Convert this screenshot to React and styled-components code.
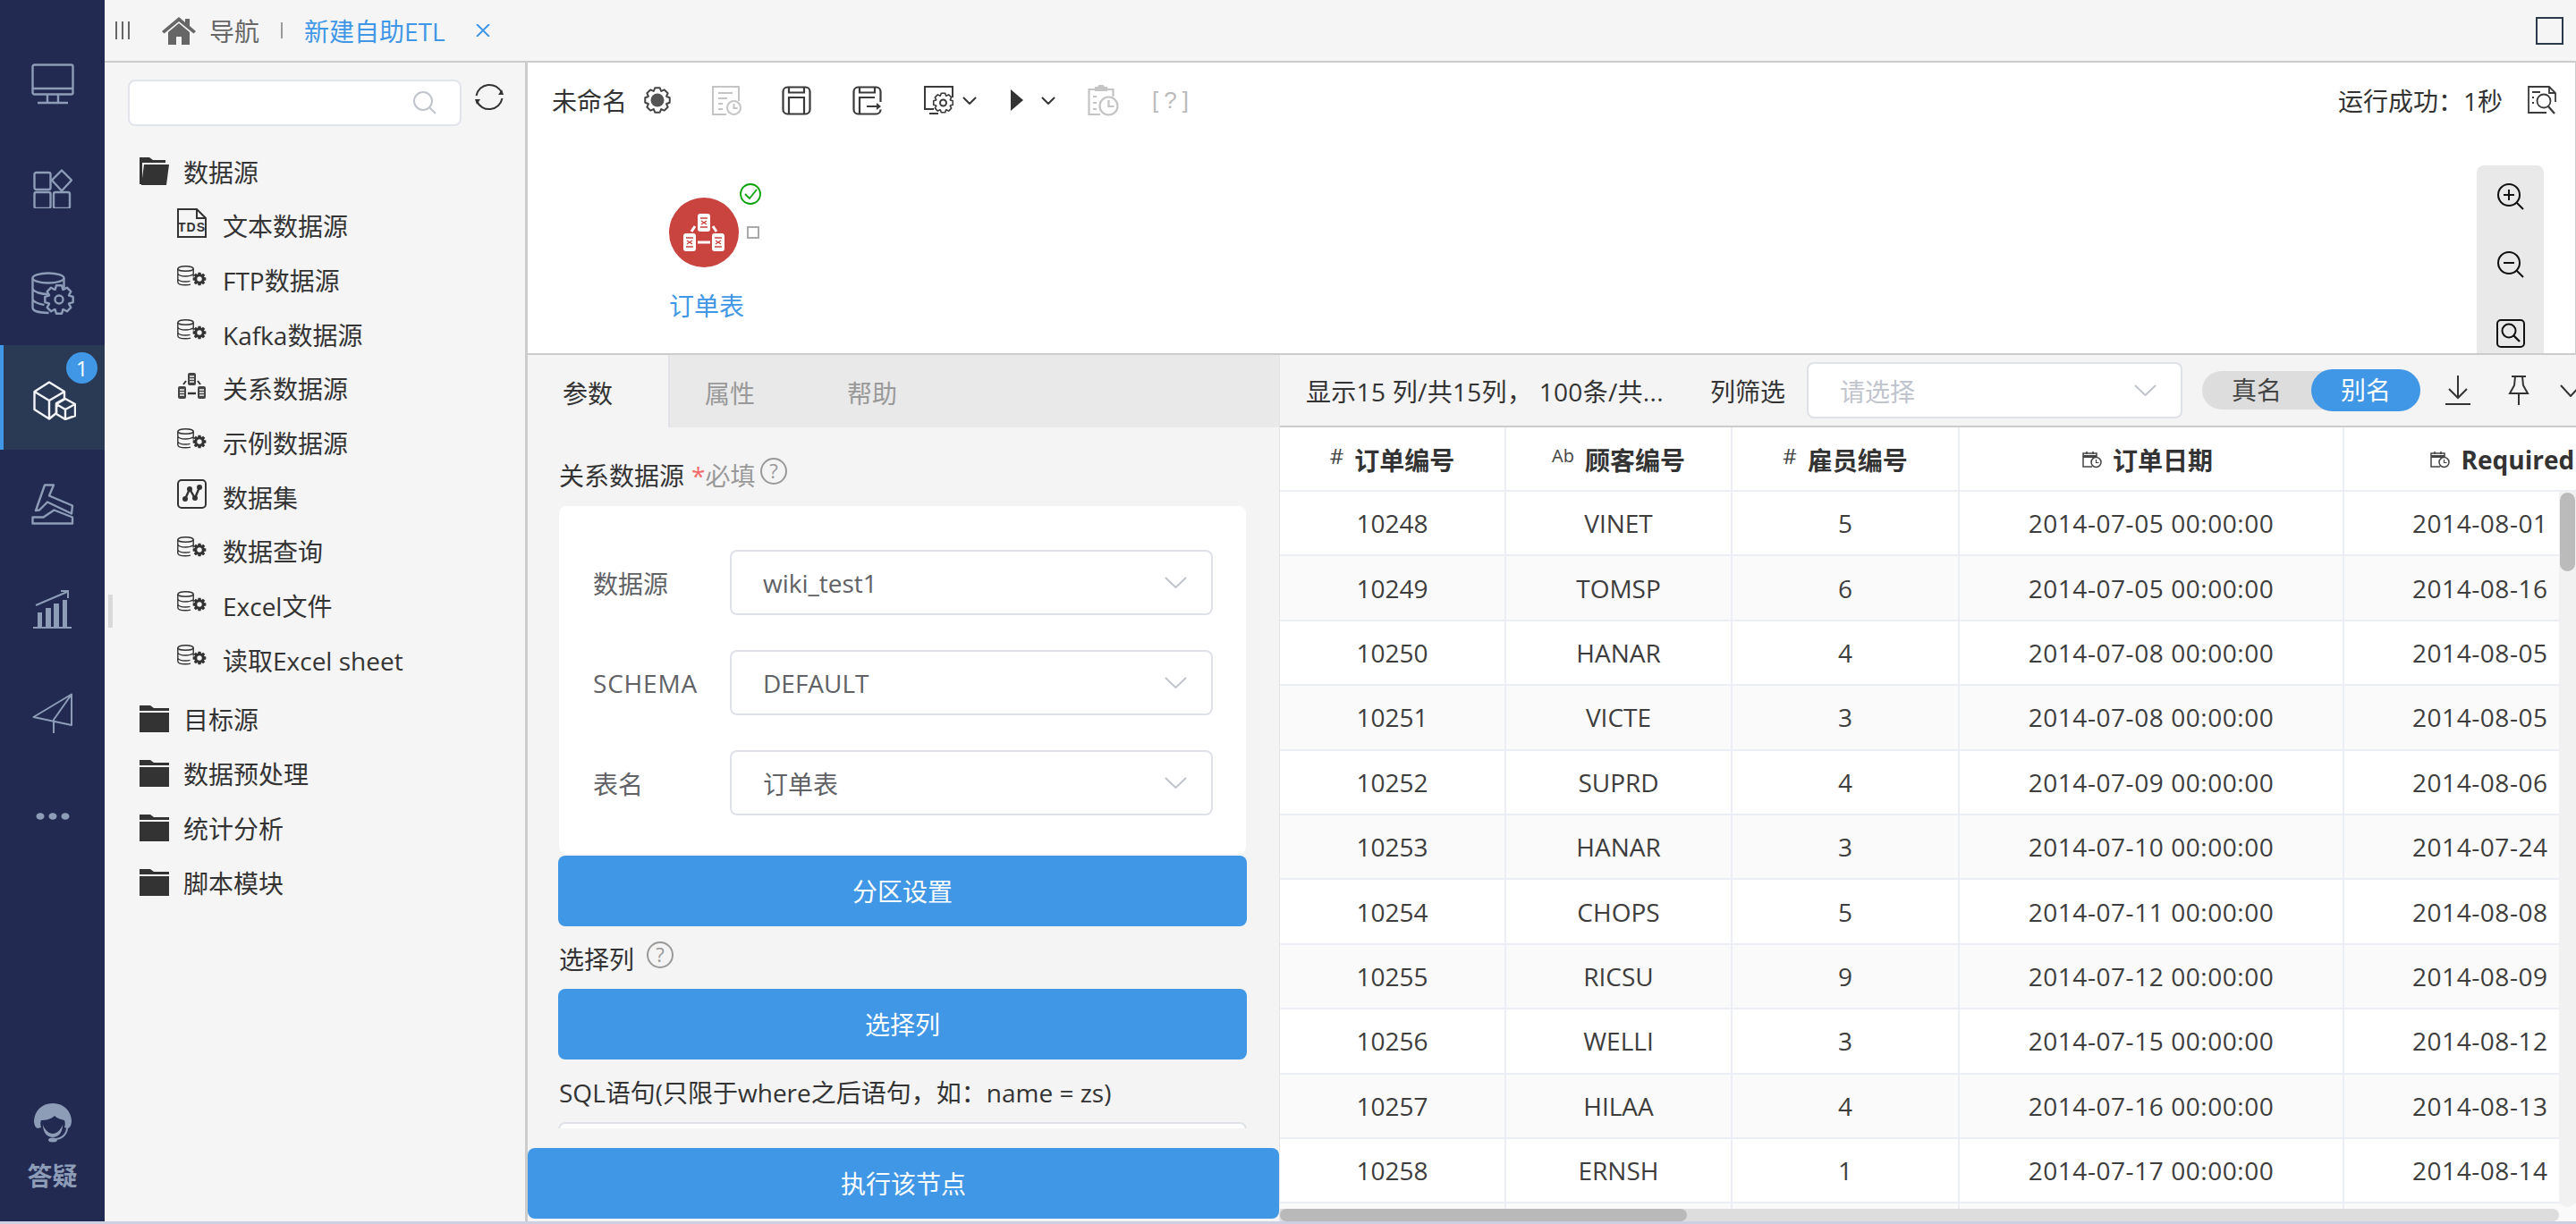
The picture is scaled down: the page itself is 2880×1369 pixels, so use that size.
import React from "react";
import styled, { createGlobalStyle } from "styled-components";

const BLUE = "#3f97e6";
const NAV_ICON = "#8d9cb7";
const NAV_BG = "#222a52";
const LINE = "#eceef5";

const GlobalStyle = createGlobalStyle`
  html, body {
    margin: 0;
    padding: 0;
    height: 100%;
    overflow: hidden;
    background: #f5f5f5;
    color: #333;
    font-family: "Open Sans", "Noto Sans CJK SC", sans-serif;
    font-size: 28px;
  }
  * { box-sizing: border-box; }
`;

const Shell = styled.div`
  display: flex;
  height: 100vh;
  border-bottom: 3px solid #cdd0e0;
`;

/* left nav */
const SideNav = styled.nav`
  width: 117px;
  flex: none;
  display: flex;
  flex-direction: column;
  padding-top: 35px;
  background: ${NAV_BG};
`;
const NavItem = styled.div`
  position: relative;
  height: 117px;
  flex: none;
  display: flex;
  align-items: center;
  justify-content: center;
  padding-top: ${(p) => p.$pad || 0}px;
  background: ${(p) => (p.$active ? "#2a3a54" : "transparent")};
  border-left: ${(p) => (p.$active ? `4px solid ${BLUE}` : "none")};
`;
const Badge = styled.span`
  position: absolute;
  top: 8px;
  left: 70px;
  width: 35px;
  height: 35px;
  border-radius: 50%;
  background: ${BLUE};
  color: #fff;
  font-size: 24px;
  line-height: 35px;
  text-align: center;
`;
const NavFoot = styled.div`
  margin-top: auto;
  padding-bottom: 32px;
  display: flex;
  flex-direction: column;
  align-items: center;
  gap: 18px;
  color: ${NAV_ICON};
  font-weight: 700;
  line-height: 38px;
`;

const Body = styled.div`
  flex: 1;
  min-width: 0;
  display: flex;
  flex-direction: column;
`;

/* top tabs */
const TabStrip = styled.div`
  height: 70px;
  flex: none;
  display: flex;
  align-items: center;
  padding-left: 11px;
  padding-right: 14px;
  background: #f5f5f5;
  border-bottom: 2px solid #ccc;
`;
const HomeGlyph = styled.svg`
  margin-left: 35px;
`;
const HomeLabel = styled.span`
  margin-left: 15px;
  color: #666;
`;
const TabSep = styled.span`
  width: 2px;
  height: 18px;
  margin-left: 24px;
  background: #999;
`;
const CurrentTab = styled.span`
  margin-left: 24px;
  color: ${BLUE};
`;
const CloseMark = styled.svg`
  margin-left: 34px;
`;
const MaxButton = styled.span`
  width: 31px;
  height: 31px;
  margin-left: auto;
  border: 2px solid #2b3a4a;
`;

const Workspace = styled.div`
  flex: 1;
  min-height: 0;
  display: flex;
`;

/* tree */
const TreePanel = styled.aside`
  position: relative;
  width: 473px;
  flex: none;
  padding: 19px 0 0 26px;
  background: #f5f5f5;
  border-right: 3px solid #ccc;
`;
const SearchRow = styled.div`
  display: flex;
  align-items: flex-start;
  gap: 15px;
`;
const SearchBox = styled.div`
  width: 373px;
  height: 52px;
  display: flex;
  align-items: center;
  justify-content: flex-end;
  padding-right: 26px;
  background: #fff;
  border: 2px solid #e2e4ec;
  border-radius: 8px;
`;
const Refresh = styled.svg`
  margin-top: 3px;
`;
const Tree = styled.ul`
  list-style: none;
  margin: 20px 0 0;
  padding: 0;
`;
const TreeRow = styled.li`
  height: ${(p) => (p.$child ? "60.7px" : "61px")};
  display: flex;
  align-items: center;
  padding-left: ${(p) => (p.$child ? "55px" : "13px")};
  gap: ${(p) => (p.$child ? "18px" : "16px")};
  color: #333;
  white-space: nowrap;
`;
const TreeChildren = styled.ul`
  list-style: none;
  margin: 0 0 5px;
  padding: 0;
`;
const TreeIconBox = styled.span`
  width: 33px;
  height: 33px;
  flex: none;
  display: flex;
  align-items: center;
  justify-content: center;
  margin-top: ${(p) => p.$up || 0}px;
`;
const DragHandle = styled.span`
  position: absolute;
  left: 4px;
  top: 595px;
  width: 5px;
  height: 37px;
  background: #d9d9d9;
`;

const MainArea = styled.main`
  flex: 1;
  min-width: 0;
  display: flex;
  flex-direction: column;
`;

/* flow toolbar + canvas */
const FlowPane = styled.section`
  position: relative;
  height: 327px;
  flex: none;
  background: #fff;
  border-bottom: 2px solid #ccc;
  border-right: 1px solid #ccc;
`;
const FlowBar = styled.div`
  height: 84px;
  display: flex;
  align-items: center;
  padding: 0 21px 0 27px;
`;
const ToolSlot = styled.span`
  display: flex;
  margin-left: ${(p) => p.$gap}px;
`;
const HelpTag = styled.span`
  margin-left: 37px;
  color: #bbb;
  font-size: 26px;
  letter-spacing: 6px;
  white-space: nowrap;
  font-family: "Liberation Sans", sans-serif;
`;
const RunStatus = styled.span`
  margin-left: auto;
`;
const StatusSlot = styled.span`
  display: flex;
  margin-left: 28px;
`;
const FlowNode = styled.div`
  position: absolute;
  left: 158px;
  top: 151px;
  width: 84px;
`;
const NodeCircle = styled.div`
  width: 78px;
  height: 78px;
  border-radius: 50%;
  background: #c9433f;
`;
const NodeCheck = styled.svg`
  position: absolute;
  left: 79px;
  top: -16px;
`;
const NodeBox = styled.span`
  position: absolute;
  left: 87px;
  top: 32px;
  width: 14px;
  height: 14px;
  border: 2px solid #aaa;
`;
const NodeLabel = styled.div`
  margin-top: 23px;
  color: ${BLUE};
  line-height: 40px;
  white-space: nowrap;
`;
const ZoomTools = styled.div`
  position: absolute;
  right: 35px;
  bottom: 0;
  top: 115px;
  width: 75px;
  display: flex;
  flex-direction: column;
  align-items: center;
  gap: 46px;
  padding-top: 20px;
  background: #e9e9e9;
  border-radius: 8px 8px 0 0;
`;

const BottomPane = styled.div`
  flex: 1;
  min-height: 0;
  display: flex;
`;

/* params form */
const FormPane = styled.section`
  width: 840px;
  flex: none;
  display: flex;
  flex-direction: column;
  background: #f4f4f4;
`;
const FormTabs = styled.div`
  height: 81px;
  flex: none;
  display: flex;
  background: #e9e9e9;
`;
const FormTab = styled.div`
  width: 159px;
  padding: 24px 0 0 39px;
  line-height: 38px;
  color: ${(p) => (p.$active ? "#333" : "#999")};
  background: ${(p) => (p.$active ? "#f4f4f4" : "transparent")};
  border-right: ${(p) => (p.$active ? "2px solid #e0e2e8" : "none")};
`;
const FormBody = styled.div`
  flex: 1;
  min-height: 0;
  overflow: hidden;
  padding: 33px 36px 0 34px;
`;
const FieldLabel = styled.div`
  display: flex;
  align-items: center;
  height: 40px;
  margin-top: ${(p) => p.$top || 0}px;
  padding-left: 1px;
  color: #333;
  white-space: nowrap;
`;
const Required = styled.span`
  margin-left: 8px;
  color: #999;
  & > b {
    color: #f56c6c;
    font-weight: 400;
  }
`;
const HintIcon = styled.svg`
  margin: -8px 0 0 ${(p) => p.$gap || 9}px;
`;
const Card = styled.div`
  margin: 15px 1px 0;
  padding: 49px 37px 43px 38px;
  background: #fff;
  border-radius: 8px;
  display: flex;
  flex-direction: column;
  gap: 39px;
`;
const FieldRow = styled.div`
  display: flex;
  align-items: center;
  color: #606266;
`;
const FieldName = styled.span`
  width: 153px;
  flex: none;
  letter-spacing: ${(p) => (p.$latin ? "0.8px" : "0")};
`;
const SelectBox = styled.div`
  flex: 1;
  height: ${(p) => p.$h || 73}px;
  display: flex;
  align-items: center;
  justify-content: space-between;
  padding: 0 27px 0 35px;
  background: #fff;
  border: 2px solid #dfe1e8;
  border-radius: 8px;
  color: ${(p) => (p.$placeholder ? "#c0c4cc" : "#606266")};
`;
const PrimaryButton = styled.button`
  display: block;
  width: 100%;
  height: 79px;
  margin-top: ${(p) => p.$top || 0}px;
  padding: 0 0 2px;
  border: none;
  border-radius: 8px;
  background: ${BLUE};
  color: #fff;
  font: inherit;
`;
const SqlBox = styled.div`
  height: 120px;
  margin-top: 14px;
  background: #fff;
  border: 2px solid #dfe1e8;
  border-radius: 8px;
`;
const FormFooter = styled.div`
  margin: 22px 0 3px;
  flex: none;
`;

/* data table */
const DataPane = styled.section`
  flex: 1;
  min-width: 0;
  display: flex;
  flex-direction: column;
  background: #fff;
  border-left: 1px solid #e5e5e5;
`;
const DataBar = styled.div`
  height: 81px;
  flex: none;
  display: flex;
  align-items: center;
  padding-left: 29px;
  overflow: hidden;
  background: #f4f4f4;
  border-bottom: 2px solid #ccc;
`;
const DataInfo = styled.span`
  width: 401px;
  flex: none;
  white-space: nowrap;
  letter-spacing: 0.3px;
`;
const FilterLabel = styled.span`
  flex: none;
  margin-left: 51px;
`;
const FilterSelect = styled(SelectBox)`
  flex: none;
  width: 420px;
  margin-left: 24px;
`;
const NameToggle = styled.div`
  flex: none;
  width: 244px;
  height: 43px;
  margin-left: 22px;
  display: flex;
  align-items: center;
  background: #ddd;
  border-radius: 22px;
`;
const ToggleOption = styled.span`
  width: 122px;
  height: ${(p) => (p.$on ? "47px" : "43px")};
  line-height: ${(p) => (p.$on ? "47px" : "43px")};
  text-align: center;
  border-radius: 24px;
  color: ${(p) => (p.$on ? "#fff" : "#444")};
  background: ${(p) => (p.$on ? BLUE : "transparent")};
`;
const BarIcon = styled.svg`
  flex: none;
  margin-left: ${(p) => p.$gap}px;
`;
const TableFrame = styled.div`
  position: relative;
  flex: 1;
  min-height: 0;
  overflow: hidden;
`;
const GridRow = styled.div`
  display: grid;
  grid-template-columns: 253px 253px 254px 430px 430px;
  width: 1620px;
  height: ${(p) => (p.$head ? "72px" : "72.4px")};
  background: ${(p) => (p.$alt ? "#fafafa" : "#fff")};
  border-bottom: 2px solid ${LINE};
`;
const Cell = styled.div`
  display: flex;
  align-items: center;
  justify-content: center;
  border-right: 2px solid ${LINE};
  overflow: hidden;
  white-space: nowrap;
  color: #3d3d3d;
`;
const DateCell = styled(Cell)`
  letter-spacing: 0.55px;
`;
const DueCell = styled(DateCell)`
  justify-content: flex-start;
  padding-left: 76px;
`;
const HeadCell = styled(Cell)`
  gap: 12px;
  padding-top: 1px;
  padding-right: ${(p) => (p.$date ? "8px" : "0")};
  font-weight: 700;
  color: #333;
`;
const TypeMark = styled.span`
  font-weight: 400;
  font-size: ${(p) => p.$size || 24}px;
  color: #444;
  margin-top: -8px;
`;
const VScroll = styled.div`
  position: absolute;
  top: 72px;
  right: 0;
  bottom: 16px;
  width: 19px;
  background: #f1f1f1;
  border-radius: 0 0 9px 9px;
`;
const VThumb = styled.div`
  height: 88px;
  margin: 1px 1px 0;
  background: #bbb;
  border-radius: 9px;
`;
const HScroll = styled.div`
  position: absolute;
  left: 0;
  right: 19px;
  bottom: 0;
  height: 14px;
  background: #ddd;
  border-radius: 0 7px 7px 0;
`;
const HThumb = styled.div`
  width: 455px;
  height: 14px;
  background: #b9b9b9;
  border-radius: 7px;
`;

/* icons */
const gearPath = (cx, cy, R, r, n) => {
  let d = "";
  for (let i = 0; i < n; i++) {
    const a = (i / n) * Math.PI * 2;
    const w = Math.PI / n;
    const pts = [
      [r, a - w * 0.95],
      [R, a - w * 0.5],
      [R, a + w * 0.5],
      [r, a + w * 0.95],
    ];
    pts.forEach(([rad, t], j) => {
      const x = (cx + rad * Math.cos(t)).toFixed(2);
      const y = (cy + rad * Math.sin(t)).toFixed(2);
      d += `${i === 0 && j === 0 ? "M" : "L"}${x} ${y} `;
    });
  }
  return d + "Z";
};

const Stroke = { fill: "none", stroke: NAV_ICON, strokeWidth: 2.4, strokeLinejoin: "round" };

const MonitorIcon = () => (
  <svg width="48" height="46" viewBox="0 0 48 46" {...Stroke}>
    <rect x="1.5" y="1.5" width="45" height="33" rx="2" />
    <path d="M1.5 28h45M18 35v9M30 35v9M7 44h34" />
  </svg>
);
const AppsIcon = () => (
  <svg width="44" height="44" viewBox="0 0 44 44" {...Stroke}>
    <rect x="1.5" y="4" width="18" height="19" rx="2" />
    <path d="M32 1.5l11 11-11 12-11-12z" />
    <rect x="1.5" y="26" width="18" height="18" rx="2" />
    <rect x="23" y="26" width="18" height="18" rx="2" />
  </svg>
);
const DbGearIcon = () => (
  <svg width="48" height="48" viewBox="0 0 48 48" {...Stroke}>
    <ellipse cx="19" cy="7" rx="17.5" ry="5.5" />
    <path d="M1.5 7v33c0 4 8 6 18 6M36.5 7v11M1.5 19c2 4 10 6 17 6M1.5 31c2 4 8 5 13 6" />
    <path d={gearPath(31, 31, 16, 12, 8)} />
    <circle cx="31" cy="31" r="4.5" />
  </svg>
);
const CubesIcon = () => (
  <svg width="48" height="44" viewBox="0 0 48 44" fill="none" stroke="#f2f4f8" strokeWidth="2.4" strokeLinejoin="round">
    <path d="M18 1.5L35 12v8l-9 5v11l-8 6.5L1.5 32V12zM1.5 12L18 22l17-10M18 22v20.5" />
    <path d="M36 20l11 6v13l-11 4-10-6V26zM26 26l10 6 11-6M36 32v11" />
  </svg>
);
const HammerIcon = () => (
  <svg width="48" height="46" viewBox="0 0 48 46" {...Stroke}>
    <path d="M5 30L15 1.5h10l-5 12 26 11-1 9-27-13-9 9z" />
    <path d="M1.5 44.5v-7h12l12-8 20.5 8v7z" />
  </svg>
);
const ChartIcon = () => (
  <svg width="44" height="44" viewBox="0 0 44 44" fill="none">
    <path d="M5 42V26h5v16zM14 42V21h6v21zM23 42V16h6v26zM33 42V12h5v30z" fill={NAV_ICON} />
    <path d="M0 43h43M3 18L38 3M31 2h8v8" stroke={NAV_ICON} strokeWidth="2" />
  </svg>
);
const PlaneIcon = () => (
  <svg width="46" height="46" viewBox="0 0 46 46" {...Stroke} strokeWidth="2">
    <path d="M1.5 27L44 1.5V36zM44 1.5L24 30v15" />
  </svg>
);
const DotsIcon = () => (
  <svg width="38" height="10" viewBox="0 0 38 10" fill={NAV_ICON}>
    <ellipse cx="5" cy="5" rx="4.5" ry="3.8" />
    <ellipse cx="19" cy="5" rx="4.5" ry="3.8" />
    <ellipse cx="33" cy="5" rx="4.5" ry="3.8" />
  </svg>
);
const HeadsetIcon = () => (
  <svg width="42" height="44" viewBox="0 0 42 44" fill={NAV_ICON}>
    <path d="M21 0C8 0 1 9 0 19c0 4 1 8 4 9l4-1c-1-3-1-6 0-8 5 0 11-1 15-5 3 3 7 4 11 5 1 3 1 5 0 8l4 1c3-1 4-5 4-9C41 9 34 0 21 0z" />
    <path d="M10 24c2 6 7 10 11 10s9-4 11-10c0 9-5 14-11 14S10 33 10 24z" />
    <path d="M37 27c0 7-5 12-12 13" fill="none" stroke={NAV_ICON} strokeWidth="2" />
    <ellipse cx="21" cy="41" rx="5" ry="2.5" />
  </svg>
);

const FolderClosed = () => (
  <svg width="33" height="30" viewBox="0 0 33 30" fill="#333">
    <path d="M0 0h12l4 3h17v3H0z" />
    <path d="M0 8h33v22H0z" />
  </svg>
);
const FolderOpen = () => (
  <svg width="33" height="32" viewBox="0 0 33 32" fill="#333">
    <path d="M0 30V0h11l4 3h14v3H3v24z" />
    <path d="M5 8h28l-3 23H2z" />
  </svg>
);
const TdsIcon = () => (
  <svg width="33" height="33" viewBox="0 0 33 33" fill="none" stroke="#333" strokeWidth="2">
    <path d="M1 1h21l10 10v21H1zM22 1v10h10" />
    <text x="16.5" y="26" textAnchor="middle" fontFamily="Liberation Sans, sans-serif" fontSize="14" fontWeight="700" letterSpacing="1" fill="#333" stroke="none">
      TDS
    </text>
  </svg>
);
const DbSmallIcon = () => (
  <svg width="33" height="23" viewBox="0 0 33 23" fill="none" stroke="#333" strokeWidth="1.4">
    <ellipse cx="9.5" cy="3.5" rx="8.7" ry="2.8" />
    <path d="M.8 3.5v15c0 2.2 4 3.3 8.7 3.3 2 0 4-.2 5.5-.7M18.2 3.5v9M.8 9c1 2.2 4.5 3 8.7 3 3 0 6-.5 8-2M.8 15c1 2.2 4.5 3 8.7 3 2 0 3.5-.2 5-.6" />
    <path d={gearPath(25, 15, 7.5, 5.4, 8)} fill="#333" stroke="none" />
    <circle cx="25" cy="15" r="2.7" fill="#f5f5f5" stroke="none" />
  </svg>
);
const Capsule = ({ x, y, color, inner }) => (
  <g>
    <rect x={x} y={y} width="9" height="14" rx="2" fill={color} />
    <path d={`M${x + 2} ${y + 4}h5M${x + 2} ${y + 10}h5M${x + 2} ${y + 7}h5`} stroke={inner} strokeWidth="1.4" />
  </g>
);
const RelationIcon = () => (
  <svg width="33" height="31" viewBox="0 0 33 31" fill="none">
    <Capsule x={12} y={1} color="#444" inner="#f5f5f5" />
    <Capsule x={1} y={16} color="#444" inner="#f5f5f5" />
    <Capsule x={23} y={16} color="#444" inner="#f5f5f5" />
    <path d="M12 24h9" stroke="#333" strokeWidth="2.4" />
    <path d="M7 14l3-4M26 14l-3-4" stroke="#333" strokeWidth="2" />
  </svg>
);
const DatasetIcon = () => (
  <svg width="33" height="33" viewBox="0 0 33 33" fill="none" stroke="#333" strokeWidth="2">
    <rect x="1" y="1" width="31" height="31" rx="4" />
    <path d="M9 22l5-11 6 10 5-12" strokeWidth="2.4" />
    <g fill="#333" stroke="none">
      <circle cx="9" cy="22" r="3" />
      <circle cx="14" cy="11" r="3" />
      <circle cx="20" cy="21" r="3" />
      <circle cx="25" cy="9" r="3" />
    </g>
  </svg>
);

const GearDotIcon = () => (
  <svg width="30" height="30" viewBox="0 0 30 30">
    <path d={gearPath(15, 15, 14, 11, 8)} fill="none" stroke="#444" strokeWidth="2" strokeLinejoin="round" />
    <circle cx="15" cy="15" r="7.5" fill="#555" />
  </svg>
);
const DocClockIcon = () => (
  <svg width="33" height="33" viewBox="0 0 33 33" fill="none" stroke="#c4c4c4" strokeWidth="2">
    <path d="M16 32H1V1h29v16" />
    <path d="M7 8h16M7 14h10M7 20h5M7 26h5" />
    <circle cx="24.5" cy="24.5" r="7.5" fill="#fff" />
    <path d="M24.5 20v5h4" />
  </svg>
);
const SaveIcon = () => (
  <svg width="33" height="33" viewBox="0 0 33 33" fill="none" stroke="#3a3a3a" strokeWidth="2.2">
    <rect x="1.5" y="1.5" width="30" height="30" rx="5" />
    <path d="M8 1.5v6h17v-6M8 31.5V13h17v18.5" />
  </svg>
);
const SaveAsIcon = () => (
  <svg width="33" height="33" viewBox="0 0 33 33" fill="none" stroke="#3a3a3a" strokeWidth="2.2">
    <path d="M31.5 18V6.5a5 5 0 0 0-5-5h-20a5 5 0 0 0-5 5v20a5 5 0 0 0 5 5h20a5 5 0 0 0 5-5" />
    <path d="M8 1.5v6h17v-6M8 31.5V13h17M16 23h14" />
    <path d="M27 19l5 4-5 4z" fill="#3a3a3a" stroke="none" />
  </svg>
);
const MonitorGearIcon = () => (
  <svg width="33" height="33" viewBox="0 0 33 33" fill="none" stroke="#3a3a3a" strokeWidth="2">
    <path d="M11 26H1V1h31v12M6 31h10" />
    <path d={gearPath(21.5, 19, 11, 8.5, 8)} fill="#fff" strokeWidth="1.6" strokeLinejoin="round" />
    <circle cx="21.5" cy="19" r="3.5" />
  </svg>
);
const ChevronThin = ({ w = 16, h = 9, color = "#333", sw = 2 }) => (
  <svg width={w} height={h} viewBox={`0 0 ${w} ${h}`} fill="none" stroke={color} strokeWidth={sw}>
    <path d={`M1 1l${w / 2 - 1} ${h - 2} ${w / 2 - 1} ${-(h - 2)}`} />
  </svg>
);
const PlayIcon = () => (
  <svg width="14" height="24" viewBox="0 0 14 24" fill="#333">
    <path d="M0 0l14 12L0 24z" />
  </svg>
);
const ClipClockIcon = () => (
  <svg width="35" height="35" viewBox="0 0 35 35" fill="none" stroke="#c4c4c4" strokeWidth="2.2">
    <path d="M14 33H1.5V5H9M21 5h7.5v8" />
    <path d="M9 6V3h3l1-2h4l1 2h3v3z" fill="#c4c4c4" />
    <path d="M6 13h4M6 20h4M6 27h4" />
    <circle cx="23.5" cy="23.5" r="10" fill="#fff" />
    <path d="M23.5 17v7h6" />
  </svg>
);
const DocSearchIcon = () => (
  <svg width="32" height="32" viewBox="0 0 32 32" fill="none" stroke="#3a3a3a" strokeWidth="1.8">
    <path d="M21 30H1V1h23l7 7v10M24 1v7h7" />
    <path d="M5 7h9M5 13h2M5 19h2" />
    <circle cx="18" cy="17" r="7.5" />
    <path d="M23 23l7 8" strokeWidth="2.2" />
  </svg>
);
const ZoomGlass = ({ mark }) => (
  <svg width="30" height="30" viewBox="0 0 30 30" fill="none" stroke="#111" strokeWidth="2">
    <circle cx="13" cy="13" r="12" />
    <path d="M21.5 21.5l7.5 7.5M7 13h12" />
    {mark && <path d="M13 7v12" />}
  </svg>
);
const ZoomFit = () => (
  <svg width="32" height="32" viewBox="0 0 32 32" fill="none" stroke="#111" strokeWidth="2">
    <rect x="1" y="1" width="30" height="30" rx="4" />
    <circle cx="14" cy="13" r="7.5" />
    <path d="M19.5 18.5l6.5 6.5" strokeWidth="2.4" />
  </svg>
);
const QuestionIcon = ({ gap }) => (
  <HintIcon $gap={gap} width="30" height="30" viewBox="0 0 30 30" fill="none" stroke="#999" strokeWidth="2">
    <circle cx="15" cy="15" r="14" />
    <text x="15" y="23" textAnchor="middle" fontSize="22" fontFamily="Open Sans, sans-serif" fill="#999" stroke="none">
      ?
    </text>
  </HintIcon>
);
const Capsule3 = ({ x, y }) => (
  <g>
    <rect x={x} y={y} width="14" height="20" rx="3" fill="#fff" />
    <path d={`M${x + 3} ${y + 5}h8M${x + 4} ${y + 8}l6 4M${x + 10} ${y + 8}l-6 4M${x + 3} ${y + 15}h8`} stroke="#c9433f" strokeWidth="1.5" />
  </g>
);
const NodeGlyph = () => (
  <svg width="78" height="78" viewBox="0 0 78 78" fill="none">
    <Capsule3 x={32} y={18} />
    <Capsule3 x={16} y={40} />
    <Capsule3 x={48} y={40} />
    <path d="M32 50h14" stroke="#fff" strokeWidth="3" />
    <path d="M25 38l4-6M53 38l-4-6" stroke="#fff" strokeWidth="3" />
  </svg>
);
const DateIcon = () => (
  <svg width="22" height="20" viewBox="0 0 22 20" fill="none" stroke="#444" strokeWidth="1.5">
    <path d="M11 18H1V3h15v4" />
    <path d="M1 6.5h15" strokeWidth="3" />
    <path d="M5 1v3M12 1v3" />
    <circle cx="15.5" cy="13" r="5.5" fill="#fff" />
    <path d="M15.5 10v3.5h3" strokeWidth="1.2" />
  </svg>
);

const tree = [
  [<TdsIcon />, "文本数据源"],
  [<DbSmallIcon />, "FTP数据源", 7],
  [<DbSmallIcon />, "Kafka数据源", 7],
  [<RelationIcon />, "关系数据源"],
  [<DbSmallIcon />, "示例数据源", 7],
  [<DatasetIcon />, "数据集"],
  [<DbSmallIcon />, "数据查询", 7],
  [<DbSmallIcon />, "Excel文件", 7],
  [<DbSmallIcon />, "读取Excel sheet", 7],
];

const folders = ["目标源", "数据预处理", "统计分析", "脚本模块"];

const rows = [
  ["10248", "VINET", 5, "07-05", "08-01"],
  ["10249", "TOMSP", 6, "07-05", "08-16"],
  ["10250", "HANAR", 4, "07-08", "08-05"],
  ["10251", "VICTE", 3, "07-08", "08-05"],
  ["10252", "SUPRD", 4, "07-09", "08-06"],
  ["10253", "HANAR", 3, "07-10", "07-24"],
  ["10254", "CHOPS", 5, "07-11", "08-08"],
  ["10255", "RICSU", 9, "07-12", "08-09"],
  ["10256", "WELLI", 3, "07-15", "08-12"],
  ["10257", "HILAA", 4, "07-16", "08-13"],
  ["10258", "ERNSH", 1, "07-17", "08-14"],
  ["10259", "CENTC", 4, "07-18", "08-15"],
];

function App() {
  return (
    <Shell>
      <GlobalStyle />
      <SideNav>
        <NavItem><MonitorIcon /></NavItem>
        <NavItem><AppsIcon /></NavItem>
        <NavItem><DbGearIcon /></NavItem>
        <NavItem $active $pad={6}>
          <CubesIcon />
          <Badge>1</Badge>
        </NavItem>
        <NavItem $pad={4}><HammerIcon /></NavItem>
        <NavItem $pad={4}><ChartIcon /></NavItem>
        <NavItem $pad={4}><PlaneIcon /></NavItem>
        <NavItem><DotsIcon /></NavItem>
        <NavFoot>
          <HeadsetIcon />
          <span>答疑</span>
        </NavFoot>
      </SideNav>

      <Body>
        <TabStrip>
          <svg width="18" height="20" viewBox="0 0 18 20" stroke="#666" strokeWidth="2">
            <path d="M2 0v20M9 0v20M16 0v20" />
          </svg>
          <HomeGlyph width="38" height="31" viewBox="0 0 38 31" fill="#666">
            <path d="M19 7L7 17v14h9v-9h6v9h9V17z" />
            <path d="M19 0L0 16l2.5 2.5L19 5l16.5 13.5L38 16l-7-6V2h-5v4z" />
          </HomeGlyph>
          <HomeLabel>导航</HomeLabel>
          <TabSep />
          <CurrentTab>新建自助ETL</CurrentTab>
          <CloseMark width="16" height="14" viewBox="0 0 16 14" fill="none" stroke={BLUE} strokeWidth="2">
            <path d="M1 0l14 14M15 0L1 14" />
          </CloseMark>
          <MaxButton />
        </TabStrip>

        <Workspace>
          <TreePanel>
            <SearchRow>
              <SearchBox>
                <svg width="26" height="26" viewBox="0 0 26 26" fill="none" stroke="#c0c4cc" strokeWidth="2">
                  <circle cx="11" cy="11" r="10" />
                  <path d="M18 18l7 7" />
                </svg>
              </SearchBox>
              <Refresh width="32" height="33" viewBox="0 0 32 33" fill="none" stroke="#333" strokeWidth="2">
                <path d="M1.5 15A15 15 0 0 1 30 12" />
                <path d="M30.5 18A15 15 0 0 1 2 21" />
                <path d="M26 14h6l-2-6zM6 19H0l2 6z" fill="#333" stroke="none" />
              </Refresh>
            </SearchRow>
            <Tree>
              <TreeRow>
                <FolderOpen />
                <span>数据源</span>
              </TreeRow>
              <TreeChildren>
                {tree.map(([icon, label, up]) => (
                  <TreeRow $child key={label}>
                    <TreeIconBox $up={up ? -10 : -6}>{icon}</TreeIconBox>
                    <span>{label}</span>
                  </TreeRow>
                ))}
              </TreeChildren>
              {folders.map((name) => (
                <TreeRow key={name}>
                  <FolderClosed />
                  <span>{name}</span>
                </TreeRow>
              ))}
            </Tree>
            <DragHandle />
          </TreePanel>

          <MainArea>
            <FlowPane>
              <FlowBar>
                <span>未命名</span>
                <ToolSlot $gap={19}><GearDotIcon /></ToolSlot>
                <ToolSlot $gap={46}><DocClockIcon /></ToolSlot>
                <ToolSlot $gap={45}><SaveIcon /></ToolSlot>
                <ToolSlot $gap={46}><SaveAsIcon /></ToolSlot>
                <ToolSlot $gap={47}><MonitorGearIcon /></ToolSlot>
                <ToolSlot $gap={10}><ChevronThin /></ToolSlot>
                <ToolSlot $gap={38}><PlayIcon /></ToolSlot>
                <ToolSlot $gap={20}><ChevronThin /></ToolSlot>
                <ToolSlot $gap={36}><ClipClockIcon /></ToolSlot>
                <HelpTag>[?]</HelpTag>
                <RunStatus>运行成功：1秒</RunStatus>
                <StatusSlot><DocSearchIcon /></StatusSlot>
              </FlowBar>
              <FlowNode>
                <NodeCircle><NodeGlyph /></NodeCircle>
                <NodeCheck width="24" height="24" viewBox="0 0 24 24" fill="none" stroke="#09a30a" strokeWidth="1.8">
                  <circle cx="12" cy="12" r="11" />
                  <path d="M6 12l5 5 8-10" />
                </NodeCheck>
                <NodeBox />
                <NodeLabel>订单表</NodeLabel>
              </FlowNode>
              <ZoomTools>
                <ZoomGlass mark />
                <ZoomGlass />
                <ZoomFit />
              </ZoomTools>
            </FlowPane>

            <BottomPane>
              <FormPane>
                <FormTabs>
                  <FormTab $active>参数</FormTab>
                  <FormTab>属性</FormTab>
                  <FormTab>帮助</FormTab>
                </FormTabs>
                <FormBody>
                  <FieldLabel>
                    关系数据源
                    <Required><b>*</b>必填</Required>
                    <QuestionIcon gap={6} />
                  </FieldLabel>
                  <Card>
                    <FieldRow>
                      <FieldName>数据源</FieldName>
                      <SelectBox>wiki_test1<ChevronThin w={25} h={13} color="#c0c4cc" /></SelectBox>
                    </FieldRow>
                    <FieldRow>
                      <FieldName $latin>SCHEMA</FieldName>
                      <SelectBox>DEFAULT<ChevronThin w={25} h={13} color="#c0c4cc" /></SelectBox>
                    </FieldRow>
                    <FieldRow>
                      <FieldName>表名</FieldName>
                      <SelectBox>订单表<ChevronThin w={25} h={13} color="#c0c4cc" /></SelectBox>
                    </FieldRow>
                  </Card>
                  <PrimaryButton $top={2}>分区设置</PrimaryButton>
                  <FieldLabel $top={16}>
                    选择列
                    <QuestionIcon gap={14} />
                  </FieldLabel>
                  <PrimaryButton $top={14}>选择列</PrimaryButton>
                  <FieldLabel $top={16}>SQL语句(只限于where之后语句，如：name = zs)</FieldLabel>
                  <SqlBox />
                </FormBody>
                <FormFooter>
                  <PrimaryButton>执行该节点</PrimaryButton>
                </FormFooter>
              </FormPane>

              <DataPane>
                <DataBar>
                  <DataInfo>显示15 列/共15列， 100条/共...</DataInfo>
                  <FilterLabel>列筛选</FilterLabel>
                  <FilterSelect $h={63} $placeholder>
                    请选择
                    <ChevronThin w={25} h={13} color="#c0c4cc" />
                  </FilterSelect>
                  <NameToggle>
                    <ToggleOption>真名</ToggleOption>
                    <ToggleOption $on>别名</ToggleOption>
                  </NameToggle>
                  <BarIcon $gap={28} width="28" height="33" viewBox="0 0 28 33" fill="none" stroke="#333" strokeWidth="2">
                    <path d="M14 0v24M4 15l10 10 10-10M0 32h28" />
                  </BarIcon>
                  <BarIcon $gap={42} width="24" height="33" viewBox="0 0 24 33" fill="none" stroke="#333" strokeWidth="2">
                    <path d="M4 1h16M8 1l-1 10-5 9h20l-5-9-1-10M12 20v13" />
                  </BarIcon>
                  <BarIcon $gap={34} width="24" height="14" viewBox="0 0 24 14" fill="none" stroke="#333" strokeWidth="2">
                    <path d="M1 1l11 12L23 1" />
                  </BarIcon>
                </DataBar>
                <TableFrame>
                  <GridRow $head>
                    <HeadCell><TypeMark>#</TypeMark>订单编号</HeadCell>
                    <HeadCell><TypeMark $size={20}>Ab</TypeMark>顾客编号</HeadCell>
                    <HeadCell><TypeMark>#</TypeMark>雇员编号</HeadCell>
                    <HeadCell $date><DateIcon />订单日期</HeadCell>
                    <HeadCell $date><DateIcon />RequiredDate</HeadCell>
                  </GridRow>
                  {rows.map((r, i) => (
                    <GridRow key={r[0]} $alt={i % 2 === 1}>
                      <Cell>{r[0]}</Cell>
                      <Cell>{r[1]}</Cell>
                      <Cell>{r[2]}</Cell>
                      <DateCell>2014-{r[3]} 00:00:00</DateCell>
                      <DueCell>2014-{r[4]}</DueCell>
                    </GridRow>
                  ))}
                  <VScroll><VThumb /></VScroll>
                  <HScroll><HThumb /></HScroll>
                </TableFrame>
              </DataPane>
            </BottomPane>
          </MainArea>
        </Workspace>
      </Body>
    </Shell>
  );
}

export default App;
